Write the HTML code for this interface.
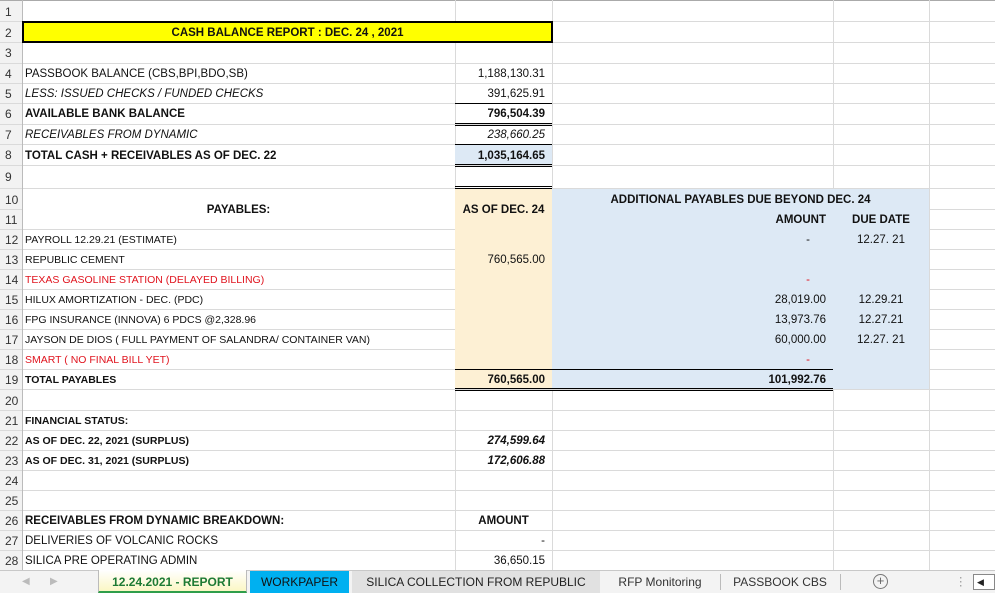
<!DOCTYPE html>
<html><head><meta charset="utf-8"><style>
*{margin:0;padding:0;box-sizing:border-box}
body{width:995px;height:593px;overflow:hidden;background:#fff;font-family:"Liberation Sans",sans-serif;position:relative;color:#111}
.h{position:absolute;left:0;width:995px;height:1px;background:#dadada}
.v{position:absolute;top:0;width:1px;height:570px;background:#dadada}
.a{position:absolute}
.t{position:absolute;font-size:11.5px;white-space:nowrap;line-height:20px;height:20px;margin-top:1px}
.s{font-size:10.5px}
.b{font-weight:bold}
.i{font-style:italic}
.r{color:#e0141e}
.n{position:absolute;left:0;width:22px;font-size:12px;line-height:20px;padding-left:5px;color:#333;margin-top:1px}
.rt{text-align:right}
.k{position:absolute;height:1px;background:#000}
</style></head><body>
<div class="a" style="left:0;top:0;width:22px;height:570px;background:#f2f2f2"></div>
<div class="a" style="left:0;top:0;width:995px;height:1px;background:#aaa"></div>
<div class="h" style="top:21px"></div><div class="h" style="top:42px"></div><div class="h" style="top:63px"></div><div class="h" style="top:83px"></div><div class="h" style="top:103px"></div><div class="h" style="top:124px"></div><div class="h" style="top:144px"></div><div class="h" style="top:165px"></div><div class="h" style="top:188px"></div><div class="h" style="top:209px"></div><div class="h" style="top:229px"></div><div class="h" style="top:249px"></div><div class="h" style="top:269px"></div><div class="h" style="top:289px"></div><div class="h" style="top:309px"></div><div class="h" style="top:329px"></div><div class="h" style="top:349px"></div><div class="h" style="top:369px"></div><div class="h" style="top:389px"></div><div class="h" style="top:410px"></div><div class="h" style="top:430px"></div><div class="h" style="top:450px"></div><div class="h" style="top:470px"></div><div class="h" style="top:490px"></div><div class="h" style="top:510px"></div><div class="h" style="top:530px"></div><div class="h" style="top:550px"></div>
<div class="v" style="left:22px;background:#bbb"></div><div class="v" style="left:455px"></div><div class="v" style="left:552px"></div><div class="v" style="left:833px"></div><div class="v" style="left:929px"></div>
<div class="a" style="left:23px;top:209px;width:432px;height:1px;background:#fff"></div>
<div class="a" style="left:455px;top:189px;width:97px;height:200px;background:#fdf0d4"></div>
<div class="a" style="left:552px;top:189px;width:377px;height:200px;background:#dde9f5"></div>
<div class="a" style="left:455px;top:145px;width:97px;height:20px;background:#dde9f5"></div>
<div class="a" style="left:22px;top:21px;width:531px;height:22px;background:#ffff00;border:2px solid #000"></div>
<div class="t b" style="left:22px;top:22px;width:531px;text-align:center;font-size:11.5px">CASH BALANCE REPORT : DEC. 24 , 2021</div>
<div class="k" style="left:455px;top:103px;width:97px"></div>
<div class="k" style="left:455px;top:123px;width:97px"></div><div class="k" style="left:455px;top:125px;width:97px"></div>
<div class="k" style="left:455px;top:144px;width:97px"></div>
<div class="k" style="left:455px;top:164px;width:97px"></div><div class="k" style="left:455px;top:166px;width:97px"></div>
<div class="k" style="left:455px;top:186px;width:97px"></div><div class="k" style="left:455px;top:188px;width:97px"></div>
<div class="k" style="left:455px;top:369px;width:378px"></div>
<div class="k" style="left:455px;top:388px;width:378px"></div><div class="k" style="left:455px;top:390px;width:378px"></div>
<div class="n" style="top:1px">1</div><div class="n" style="top:22px">2</div><div class="n" style="top:42px">3</div><div class="n" style="top:63px">4</div><div class="n" style="top:83px">5</div><div class="n" style="top:103px">6</div><div class="n" style="top:124px">7</div><div class="n" style="top:144px">8</div><div class="n" style="top:166px">9</div><div class="n" style="top:189px">10</div><div class="n" style="top:209px">11</div><div class="n" style="top:229px">12</div><div class="n" style="top:249px">13</div><div class="n" style="top:269px">14</div><div class="n" style="top:289px">15</div><div class="n" style="top:309px">16</div><div class="n" style="top:329px">17</div><div class="n" style="top:349px">18</div><div class="n" style="top:369px">19</div><div class="n" style="top:390px">20</div><div class="n" style="top:410px">21</div><div class="n" style="top:430px">22</div><div class="n" style="top:450px">23</div><div class="n" style="top:470px">24</div><div class="n" style="top:490px">25</div><div class="n" style="top:510px">26</div><div class="n" style="top:530px">27</div><div class="n" style="top:550px">28</div>
<div class="t" style="left:25px;top:63px">PASSBOOK BALANCE (CBS,BPI,BDO,SB)</div>
<div class="t i" style="left:25px;top:83px">LESS: ISSUED CHECKS / FUNDED CHECKS</div>
<div class="t b" style="left:25px;top:103px">AVAILABLE BANK BALANCE</div>
<div class="t i" style="left:25px;top:124px">RECEIVABLES FROM DYNAMIC</div>
<div class="t b" style="left:25px;top:145px">TOTAL CASH + RECEIVABLES AS OF DEC. 22</div>
<div class="t b" style="left:22px;top:199px;width:433px;text-align:center;font-size:11.5px">PAYABLES:</div>
<div class="t s" style="left:25px;top:229px">PAYROLL 12.29.21 (ESTIMATE)</div>
<div class="t s" style="left:25px;top:249px">REPUBLIC CEMENT</div>
<div class="t s r" style="left:25px;top:269px">TEXAS GASOLINE STATION (DELAYED BILLING)</div>
<div class="t s" style="left:25px;top:289px">HILUX AMORTIZATION - DEC. (PDC)</div>
<div class="t s" style="left:25px;top:309px">FPG INSURANCE (INNOVA) 6 PDCS @2,328.96</div>
<div class="t s" style="left:25px;top:329px">JAYSON DE DIOS ( FULL PAYMENT OF SALANDRA/ CONTAINER VAN)</div>
<div class="t s r" style="left:25px;top:349px">SMART ( NO FINAL BILL YET)</div>
<div class="t s b" style="left:25px;top:369px">TOTAL PAYABLES</div>
<div class="t s b" style="left:25px;top:410px">FINANCIAL STATUS:</div>
<div class="t s b" style="left:25px;top:430px">AS OF DEC. 22, 2021 (SURPLUS)</div>
<div class="t s b" style="left:25px;top:450px">AS OF DEC. 31, 2021 (SURPLUS)</div>
<div class="t b" style="left:25px;top:510px;font-size:11.5px">RECEIVABLES FROM DYNAMIC BREAKDOWN:</div>
<div class="t" style="left:25px;top:530px">DELIVERIES OF VOLCANIC ROCKS</div>
<div class="t" style="left:25px;top:550px">SILICA PRE OPERATING ADMIN</div>
<div class="t rt" style="left:455px;width:90px;top:63px">1,188,130.31</div>
<div class="t rt" style="left:455px;width:90px;top:83px">391,625.91</div>
<div class="t rt b" style="left:455px;width:90px;top:103px">796,504.39</div>
<div class="t rt i" style="left:455px;width:90px;top:124px">238,660.25</div>
<div class="t rt b" style="left:455px;width:90px;top:145px">1,035,164.65</div>
<div class="t b" style="left:455px;width:97px;top:199px;text-align:center">AS OF DEC. 24</div>
<div class="t rt" style="left:455px;width:90px;top:249px">760,565.00</div>
<div class="t rt b" style="left:455px;width:90px;top:369px">760,565.00</div>
<div class="t rt b i" style="left:455px;width:90px;top:430px">274,599.64</div>
<div class="t rt b i" style="left:455px;width:90px;top:450px">172,606.88</div>
<div class="t b" style="left:455px;width:97px;top:510px;text-align:center">AMOUNT</div>
<div class="t rt" style="left:455px;width:90px;top:530px">-</div>
<div class="t rt" style="left:455px;width:90px;top:550px">36,650.15</div>
<div class="t b" style="left:552px;width:377px;top:189px;text-align:center">ADDITIONAL PAYABLES DUE BEYOND DEC. 24</div>
<div class="t b rt" style="left:552px;width:274px;top:209px">AMOUNT</div>
<div class="t b" style="left:833px;width:96px;top:209px;text-align:center">DUE DATE</div>
<div class="t rt" style="left:552px;width:258px;top:229px">-</div>
<div class="t" style="left:833px;width:96px;top:229px;text-align:center">12.27. 21</div>
<div class="t rt r" style="left:552px;width:258px;top:269px">-</div>
<div class="t rt" style="left:552px;width:274px;top:289px">28,019.00</div>
<div class="t" style="left:833px;width:96px;top:289px;text-align:center">12.29.21</div>
<div class="t rt" style="left:552px;width:274px;top:309px">13,973.76</div>
<div class="t" style="left:833px;width:96px;top:309px;text-align:center">12.27.21</div>
<div class="t rt" style="left:552px;width:274px;top:329px">60,000.00</div>
<div class="t" style="left:833px;width:96px;top:329px;text-align:center">12.27. 21</div>
<div class="t rt r" style="left:552px;width:258px;top:349px">-</div>
<div class="t rt b" style="left:552px;width:274px;top:369px">101,992.76</div>
<div class="a" style="left:0;top:570px;width:995px;height:23px;background:#f3f3f3;border-top:1px solid #c8c8c8"></div>
<div class="t" style="left:22px;top:571px;color:#bbb;font-size:10px">&#9664;</div>
<div class="t" style="left:50px;top:571px;color:#bbb;font-size:10px">&#9654;</div>
<div class="a" style="left:98px;top:570px;width:149px;height:23px;background:linear-gradient(#ffffff,#fbf7c4);border-bottom:2px solid #2f9e4a;border-left:1px solid #bbb;border-right:1px solid #bbb"></div>
<div class="t b" style="left:98px;width:149px;top:571px;text-align:center;color:#1d7a33;font-size:12px">12.24.2021 - REPORT</div>
<div class="a" style="left:250px;top:571px;width:99px;height:22px;background:#00b0f0"></div>
<div class="t" style="left:250px;width:99px;top:571px;text-align:center;font-size:12px;color:#111">WORKPAPER</div>
<div class="a" style="left:352px;top:571px;width:248px;height:22px;background:#e1e1e1"></div>
<div class="t" style="left:352px;width:248px;top:571px;text-align:center;font-size:12px;color:#222">SILICA COLLECTION FROM REPUBLIC</div>
<div class="t" style="left:600px;width:120px;top:571px;text-align:center;font-size:12px;color:#333">RFP Monitoring</div>
<div class="a" style="left:720px;top:574px;width:1px;height:16px;background:#bbb"></div>
<div class="t" style="left:720px;width:120px;top:571px;text-align:center;font-size:12px;color:#333">PASSBOOK CBS</div>
<div class="a" style="left:840px;top:574px;width:1px;height:16px;background:#bbb"></div>
<div class="a" style="left:873px;top:574px;width:15px;height:15px;border:1px solid #777;border-radius:50%;text-align:center;font-size:13px;line-height:12px;color:#666">+</div>
<div class="t" style="left:955px;top:571px;color:#999">&#8942;</div>
<div class="a" style="left:973px;top:574px;width:22px;height:16px;border:1px solid #888;background:#fff"></div>
<div class="t" style="left:977px;top:571px;font-size:9px;color:#222">&#9664;</div>
</body></html>
